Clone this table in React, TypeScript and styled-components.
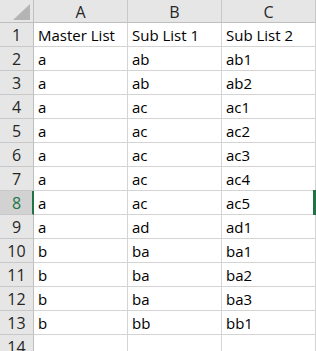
import { Fragment } from 'react';
import styled, { createGlobalStyle } from 'styled-components';

const GlobalStyle = createGlobalStyle`
  body {
    margin:0;
    background-color:#fff;
    font-family:"Open Sans", "Liberation Sans", Arial, sans-serif;
  }
`
const Sheet = styled.div`
  width:316px;
  height:351px;
  overflow:hidden;
  background-color:#fff;
`
const Grid = styled.div`
  display:grid;
  grid-template-columns:34px 94px 94px 94px 94px;
  grid-auto-rows:24px;
  grid-template-rows:23px;
  width:410px;
`
const Corner = styled.div`
  background-color:#e6e6e6;
  border-right:1px solid #bfbfbf;
  border-bottom:1px solid #bfbfbf;
  box-sizing:border-box;
  display:flex;
  align-items:flex-end;
  justify-content:flex-end;
  padding:0 3px 2px 0;
`
const ColHead = styled.div`
  background-color:#e6e6e6;
  border-right:1px solid #c8c8c8;
  border-bottom:1px solid #bfbfbf;
  box-sizing:border-box;
  display:flex;
  align-items:center;
  justify-content:center;
  font-size:16px;
  color:#262626;
  padding-top:1px;
`
const RowHead = styled.div<{ active?: boolean }>`
  background-color:${p => p.active ? '#d2d2d2' : '#e6e6e6'};
  border-right:${p => p.active ? '2px solid #217346' : '1px solid #bfbfbf'};
  border-bottom:1px solid #c8c8c8;
  box-sizing:border-box;
  display:flex;
  align-items:center;
  justify-content:center;
  font-size:16px;
  color:${p => p.active ? '#217346' : '#262626'};
  padding-top:1px;
  padding-left:${p => p.active ? '1px' : '0'};
`
const Cell = styled.div<{ selected?: boolean }>`
  position:relative;
  border-right:1px solid #d4d4d4;
  border-bottom:1px solid #d4d4d4;
  box-sizing:border-box;
  font-size:15px;
  line-height:20px;
  color:#000;
  padding:2px 0 0 4px;
  white-space:nowrap;
  ${p => p.selected ? `
  &::after {
    content:'';
    position:absolute;
    left:-3px;
    top:-1px;
    right:-1px;
    bottom:-1px;
    border:2px solid #217346;
    border-left-width:3px;
  }` : ''}
`

const rows = [
  ['Master List', 'Sub List 1', 'Sub List 2'],
  ['a', 'ab', 'ab1'],
  ['a', 'ab', 'ab2'],
  ['a', 'ac', 'ac1'],
  ['a', 'ac', 'ac2'],
  ['a', 'ac', 'ac3'],
  ['a', 'ac', 'ac4'],
  ['a', 'ac', 'ac5'],
  ['a', 'ad', 'ad1'],
  ['b', 'ba', 'ba1'],
  ['b', 'ba', 'ba2'],
  ['b', 'ba', 'ba3'],
  ['b', 'bb', 'bb1'],
  ['', '', ''],
]

export default function App() {
  return (
    <Sheet>
      <GlobalStyle />
      <Grid>
        <Corner>
          <svg width="17" height="16" viewBox="0 0 17 16">
            <polygon points="17,0 17,16 0,16" fill="#b4b4b4" />
          </svg>
        </Corner>
        <ColHead>A</ColHead>
        <ColHead>B</ColHead>
        <ColHead>C</ColHead>
        <ColHead />
        {rows.map((r, i) => (
          <Fragment key={i}>
            <RowHead active={i == 7}>{i + 1}</RowHead>
            {r.map((v, j) => <Cell key={j}>{v}</Cell>)}
            <Cell selected={i == 7} />
          </Fragment>
        ))}
      </Grid>
    </Sheet>
  )
}
